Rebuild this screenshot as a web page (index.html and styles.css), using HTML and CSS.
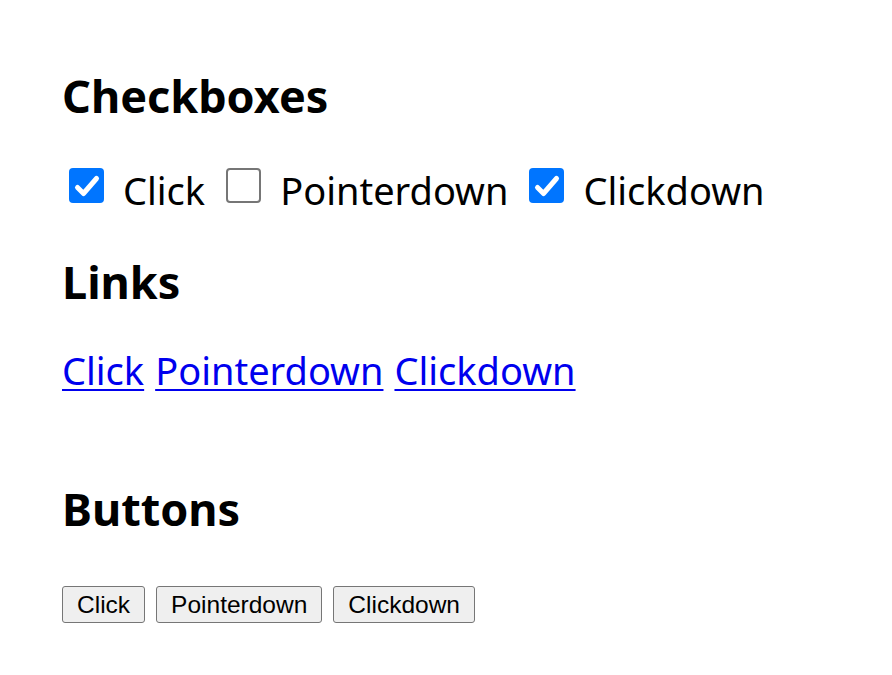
FILE: index.html
```html
<!DOCTYPE html>
<html>
<head>
<meta charset="utf-8">
<link rel="stylesheet" href="styles.css">
</head>
<body>
<main class="page">
  <h2 class="heading">Checkboxes</h2>
  <div class="checks">
    <label class="check"><span class="box on"><svg viewBox="0 0 35 35" width="35" height="35"><path d="M8.5 19.5 L14.5 25.5 L27.5 10.5" fill="none" stroke="#fff" stroke-width="5" stroke-linecap="round" stroke-linejoin="round"/></svg></span>Click</label>
    <label class="check"><span class="box"></span>Pointerdown</label>
    <label class="check"><span class="box on"><svg viewBox="0 0 35 35" width="35" height="35"><path d="M8.5 19.5 L14.5 25.5 L27.5 10.5" fill="none" stroke="#fff" stroke-width="5" stroke-linecap="round" stroke-linejoin="round"/></svg></span>Clickdown</label>
  </div>
  <h2 class="heading links-h">Links</h2>
  <div class="links">
    <a href="#">Click</a>
    <a href="#">Pointerdown</a>
    <a href="#">Clickdown</a>
  </div>
  <h2 class="heading buttons-h">Buttons</h2>
  <div class="buttons">
    <button class="btn">Click</button>
    <button class="btn">Pointerdown</button>
    <button class="btn">Clickdown</button>
  </div>
</main>
</body>
</html>
```
FILE: styles.css
```css
html, body { margin: 0; padding: 0; background: #fff; }
body { font-family: "Noto Sans", "Open Sans", sans-serif; color: #000; }
.page { padding: 68px 0 0 62px; }
.heading { font-size: 45px; font-weight: 700; margin: 0; line-height: 56px; }
.checks { display: flex; align-items: flex-start; gap: 14px; margin-top: 40px; font-size: 38px; line-height: 52px; }
.check { display: flex; align-items: flex-start; }
.box { width: 35px; height: 35px; border: 2px solid #767676; border-radius: 4px; box-sizing: border-box; margin: 4px 19px 0 7px; display: block; background: #fff; flex: none; }
.box.on { background: #0075ff; border: 0; }
.box svg { display: block; }
.links-h { margin-top: 38px; }
.links { display: flex; gap: 11px; font-size: 38px; line-height: 52px; margin-top: 34px; }
.links a { color: #0000ee; text-decoration: underline; text-decoration-thickness: 2px; text-underline-offset: 4px; }
.buttons-h { margin-top: 85px; }
.buttons { display: flex; gap: 11px; margin-top: 49px; }
.btn { font-family: "Liberation Sans", Arial, sans-serif; font-size: 24.5px; height: 37px; padding: 0 14px; background: #efefef; border: 1px solid #767676; border-radius: 3px; color: #000; line-height: normal; }
```
